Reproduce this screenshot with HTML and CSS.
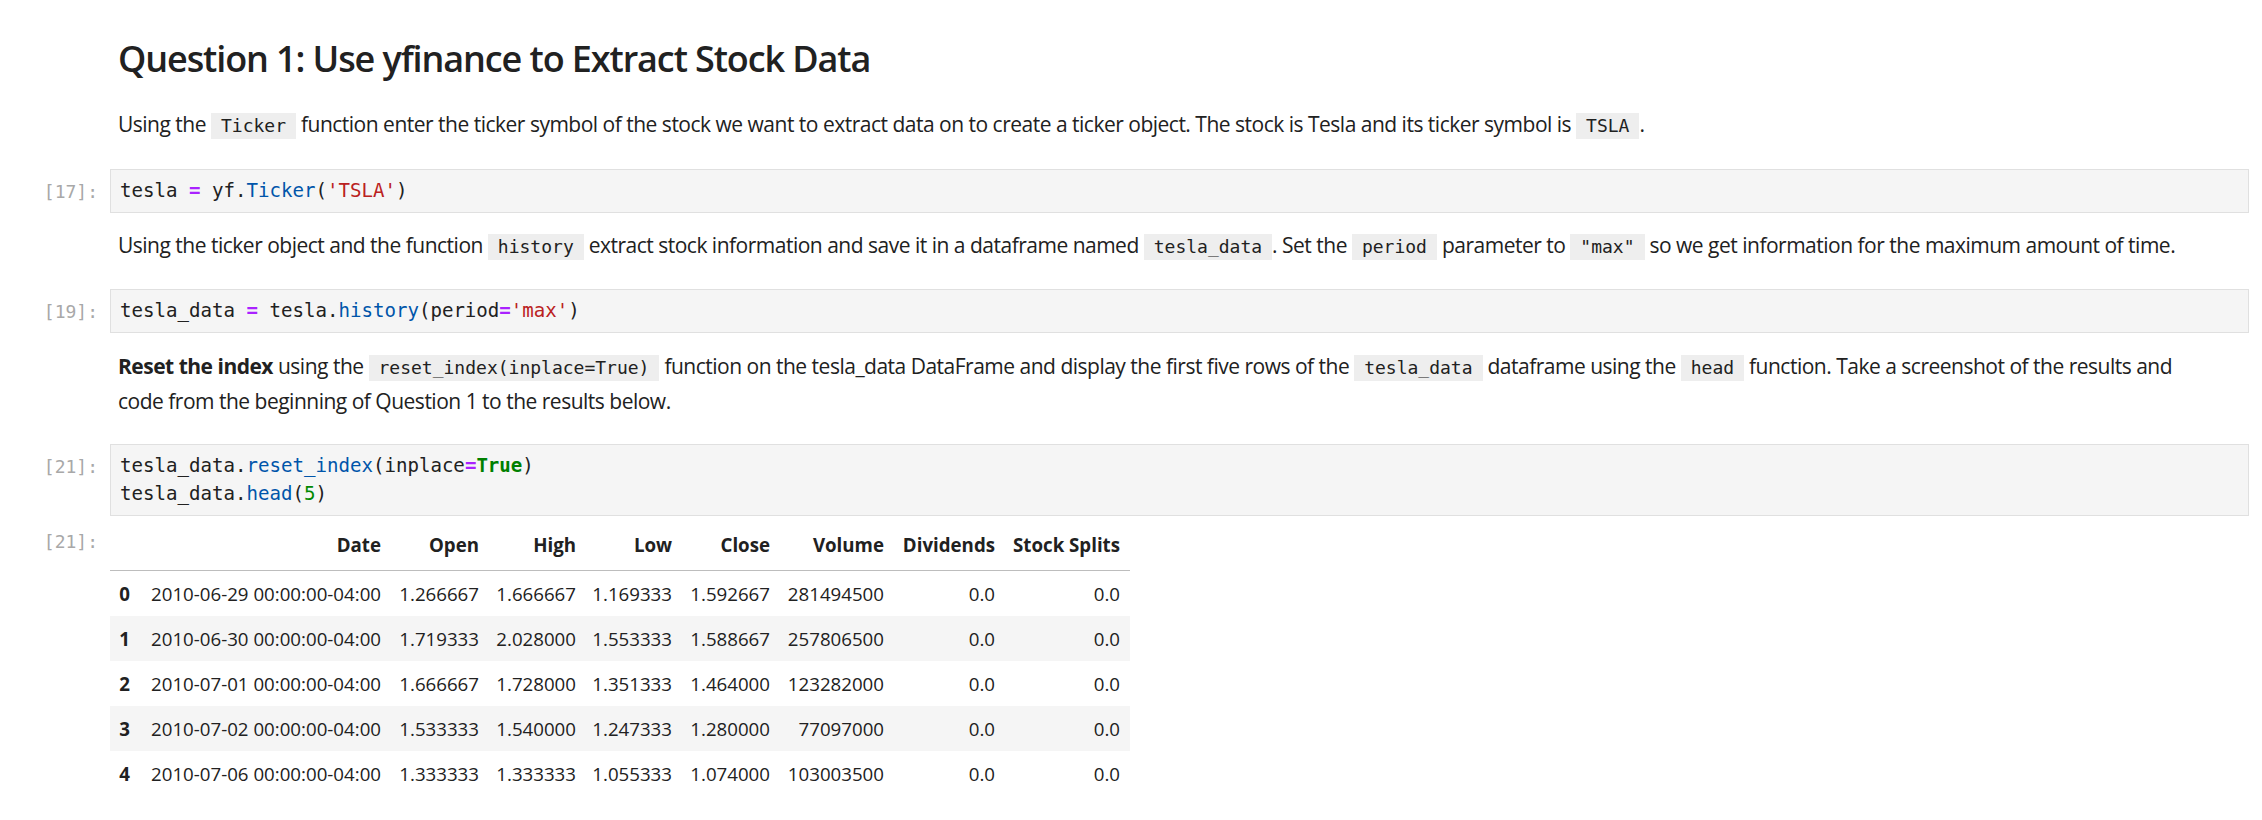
FILE: index.html
```html
<!DOCTYPE html>
<html lang="en">
<head>
<meta charset="utf-8">
<title>Question 1: Use yfinance to Extract Stock Data</title>
<link rel="stylesheet" href="styles.css">
</head>
<body>
<main class="notebook">
  <section class="cell md-cell">
    <div class="prompt"></div>
    <div class="md">
      <h2 class="title">Question 1: Use yfinance to Extract Stock Data</h2>
      <p class="para p1">Using the <code class="ic">Ticker</code> function enter the ticker symbol of the stock we want to extract data on to create a ticker object. The stock is Tesla and its ticker symbol is <code class="ic">TSLA</code>.</p>
    </div>
  </section>

  <section class="cell code-cell c1">
    <div class="prompt">[17]:</div>
    <pre class="editor"><span class="n">tesla</span> <span class="o">=</span> yf.<span class="f">Ticker</span>(<span class="s">'TSLA'</span>)</pre>
  </section>

  <section class="cell md-cell m2">
    <div class="prompt"></div>
    <div class="md">
      <p class="para">Using the ticker object and the function <code class="ic">history</code> extract stock information and save it in a dataframe named <code class="ic">tesla_data</code>. Set the <code class="ic">period</code> parameter to <code class="ic">"max"</code> so we get information for the maximum amount of time.</p>
    </div>
  </section>

  <section class="cell code-cell c2">
    <div class="prompt">[19]:</div>
    <pre class="editor">tesla_data <span class="o">=</span> tesla.<span class="f">history</span>(period<span class="o">=</span><span class="s">'max'</span>)</pre>
  </section>

  <section class="cell md-cell m3">
    <div class="prompt"></div>
    <div class="md narrow">
      <p class="para"><strong>Reset the index</strong> using the <code class="ic">reset_index(inplace=True)</code> function on the tesla_data DataFrame and display the first five rows of the <code class="ic">tesla_data</code> dataframe using the <code class="ic">head</code> function. Take a screenshot of the results and code from the beginning of Question 1 to the results below.</p>
    </div>
  </section>

  <section class="cell code-cell c3">
    <div class="prompt">[21]:</div>
    <pre class="editor">tesla_data.<span class="f">reset_index</span>(inplace<span class="o">=</span><span class="k">True</span>)
tesla_data.<span class="f">head</span>(<span class="num">5</span>)</pre>
  </section>

  <section class="cell output-cell">
    <div class="prompt out-prompt">[21]:</div>
    <div class="output">
      <table class="df">
        <colgroup>
          <col class="w-idx"><col class="w-date"><col class="w-open"><col class="w-high"><col class="w-low"><col class="w-close"><col class="w-vol"><col class="w-div"><col class="w-split">
        </colgroup>
        <thead>
          <tr><th></th><th>Date</th><th>Open</th><th>High</th><th>Low</th><th>Close</th><th>Volume</th><th>Dividends</th><th>Stock Splits</th></tr>
        </thead>
        <tbody>
          <tr><th>0</th><td>2010-06-29 00:00:00-04:00</td><td>1.266667</td><td>1.666667</td><td>1.169333</td><td>1.592667</td><td>281494500</td><td>0.0</td><td>0.0</td></tr>
          <tr><th>1</th><td>2010-06-30 00:00:00-04:00</td><td>1.719333</td><td>2.028000</td><td>1.553333</td><td>1.588667</td><td>257806500</td><td>0.0</td><td>0.0</td></tr>
          <tr><th>2</th><td>2010-07-01 00:00:00-04:00</td><td>1.666667</td><td>1.728000</td><td>1.351333</td><td>1.464000</td><td>123282000</td><td>0.0</td><td>0.0</td></tr>
          <tr><th>3</th><td>2010-07-02 00:00:00-04:00</td><td>1.533333</td><td>1.540000</td><td>1.247333</td><td>1.280000</td><td>77097000</td><td>0.0</td><td>0.0</td></tr>
          <tr><th>4</th><td>2010-07-06 00:00:00-04:00</td><td>1.333333</td><td>1.333333</td><td>1.055333</td><td>1.074000</td><td>103003500</td><td>0.0</td><td>0.0</td></tr>
        </tbody>
      </table>
    </div>
  </section>
</main>
</body>
</html>
```
FILE: styles.css
```css
html, body {
  margin: 0;
  padding: 0;
  background: #ffffff;
}

body {
  font-family: "Open Sans", "Noto Sans", sans-serif;
  color: #212121;
}

.notebook {
  padding: 37px 13px 40px 0;
}

.cell {
  display: flex;
  align-items: flex-start;
}

.prompt {
  flex: 0 0 110px;
  width: 110px;
  box-sizing: border-box;
  padding-right: 12px;
  text-align: right;
  font-family: "DejaVu Sans Mono", monospace;
  font-size: 18px;
  color: #a8a8a8;
}

.md {
  flex: 1 1 auto;
  padding-left: 8px;
  min-width: 0;
}

.md.narrow {
  padding-right: 40px;
}

.title {
  margin: 0;
  font-size: 36px;
  font-weight: 600;
  line-height: 43px;
  color: #212121;
  letter-spacing: -1.1px;
}

.para {
  margin: 0;
  font-size: 21px;
  line-height: 33.6px;
  letter-spacing: -0.5px;
}

.para strong {
  font-weight: 700;
}

.p1 {
  margin-top: 28px;
}

.ic {
  font-family: "DejaVu Sans Mono", monospace;
  font-size: 18px;
  letter-spacing: 0;
  background: #eeeeee;
  padding: 2px 10px 3px;
  color: #212121;
}

.code-cell .prompt {
  padding-top: 12px;
}

.editor {
  flex: 1 1 auto;
  margin: 0;
  background: #f5f5f5;
  border: 1px solid #e0e0e0;
  padding: 7px 9px;
  font-family: "DejaVu Sans Mono", monospace;
  font-size: 19.1px;
  line-height: 28px;
  color: #212121;
  white-space: pre;
}

.c1 { margin-top: 26px; }
.m2 { margin-top: 16px; }
.c2 { margin-top: 26px; }
.m3 { margin-top: 17px; }
.c3 { margin-top: 26px; }
.output-cell { margin-top: 9px; }

.o { color: #aa22ff; font-weight: 700; }
.f { color: #0055aa; }
.s { color: #ba2121; }
.k { color: #008000; font-weight: 700; }
.num { color: #008800; }

.out-prompt {
  padding-top: 6px;
}

.output {
  flex: 1 1 auto;
}

.df {
  border-collapse: collapse;
  table-layout: fixed;
  width: 1020px;
  font-size: 18.7px;
  color: #212121;
}

.w-idx { width: 30px; }
.w-date { width: 251px; }
.w-open { width: 98px; }
.w-high { width: 97px; }
.w-low { width: 96px; }
.w-close { width: 98px; }
.w-vol { width: 114px; }
.w-div { width: 111px; }
.w-split { width: 125px; }

.df th, .df td {
  text-align: right;
  padding: 0 10px 0 0;
  height: 45px;
  white-space: nowrap;
  vertical-align: middle;
}

.df th {
  font-weight: 700;
}

.df thead th {
  border-bottom: 1px solid #bdbdbd;
  padding-bottom: 6px;
  height: 39px;
}

.df tbody tr:nth-child(even) {
  background: #f5f5f5;
}
```
